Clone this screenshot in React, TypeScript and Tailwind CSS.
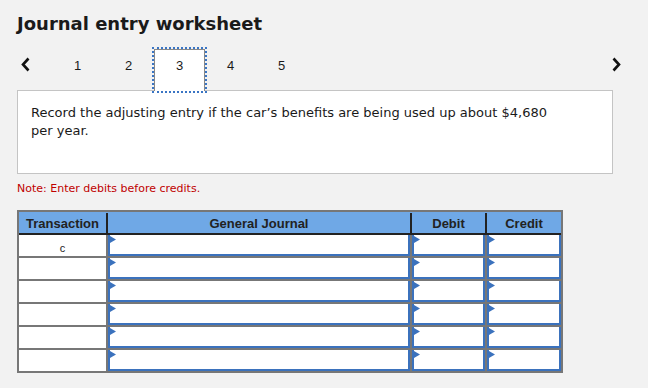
import React from "react";

const tabs = ["1", "2", "3", "4", "5"];
const rows = ["c", "", "", "", "", ""];

const Flag = () => (
  <svg className="absolute left-0 top-[1px]" width="6" height="8" viewBox="0 0 6 8">
    <polygon points="0,0 6,3.5 0,7" fill="#3b72bd" />
  </svg>
);

const InputCell = ({ last }: { last?: boolean }) => (
  <div className={last ? "h-full" : "h-full border-r-2 border-[#777]"}>
    <div className="relative h-full border-x-2 border-b-2 border-[#3b72bd] bg-white">
      <Flag />
    </div>
  </div>
);

const App = () => {
  return (
    <div className="min-h-screen bg-[#f2f2f2] px-[17px] pt-[12px] text-[#1a1a1a]">
      <h1 className="font-['DejaVu_Sans',sans-serif] text-[18px] font-bold leading-[24px]">
        Journal entry worksheet
      </h1>

      <div className="mt-[13px] flex h-[41px] items-stretch">
        <div className="flex w-[35px] items-start pl-[4px] pt-[8px]">
          <svg width="9" height="15" viewBox="0 0 9 15">
            <polyline points="7.5,1.5 2,7.5 7.5,13.5" fill="none" stroke="#111" strokeWidth="2.6" />
          </svg>
        </div>
        {tabs.map((t) => (
          <div
            key={t}
            className={
              t === "3"
                ? "relative z-10 -mb-[1px] flex w-[51px] items-start justify-center border border-b-0 border-[#888] bg-white pt-[8px] outline-2 outline-dotted outline-offset-0 outline-[#3a75c4] font-['Liberation_Sans',sans-serif] text-[13px] leading-[15px]"
                : "flex w-[51px] items-start justify-center pt-[9px] font-['Liberation_Sans',sans-serif] text-[13px] leading-[15px]"
            }
          >
            {t}
          </div>
        ))}
        <div className="ml-auto flex w-[24px] items-start justify-end pr-[10px] pt-[8px]">
          <svg width="9" height="15" viewBox="0 0 9 15">
            <polyline points="1.5,1.5 7,7.5 1.5,13.5" fill="none" stroke="#111" strokeWidth="2.6" />
          </svg>
        </div>
      </div>

      <div className="h-[84px] w-[596px] border border-[#c4c4c4] bg-white px-[13px] pt-[13px] font-['DejaVu_Sans',sans-serif] text-[13px] leading-[18px]">
        <p className="w-[540px]">
          Record the adjusting entry if the car’s benefits are being used up about $4,680 per year.
        </p>
      </div>

      <p className="mt-[8px] font-['DejaVu_Sans',sans-serif] text-[11px] leading-[14px] text-[#c00000]">
        Note: Enter debits before credits.
      </p>

      <div className="mt-[14px] w-[546px] border-2 border-[#777] font-['Liberation_Sans',sans-serif]">
        <div className="grid h-[23px] grid-cols-[89px_304px_75px_1fr] border-b-2 border-[#222] bg-[#6fa8e6] pt-[1px] text-[13px] font-bold leading-[21px] text-[#222]">
          <div className="border-r-2 border-[#222] text-center">Transaction</div>
          <div className="border-r-2 border-[#222] text-center">General Journal</div>
          <div className="border-r-2 border-[#222] text-center">Debit</div>
          <div className="text-center">Credit</div>
        </div>
        {rows.map((r, i) => (
          <div
            key={i}
            className={
              i === rows.length - 1
                ? "grid h-[21px] grid-cols-[89px_304px_75px_1fr]"
                : "grid h-[23px] grid-cols-[89px_304px_75px_1fr] border-b-2 border-[#777]"
            }
          >
            <div className="border-r-2 border-[#777] bg-white pt-[6px] text-center text-[11px] leading-[14px]">
              {r}
            </div>
            <InputCell />
            <InputCell />
            <InputCell last />
          </div>
        ))}
      </div>
    </div>
  );
};

export default App;
